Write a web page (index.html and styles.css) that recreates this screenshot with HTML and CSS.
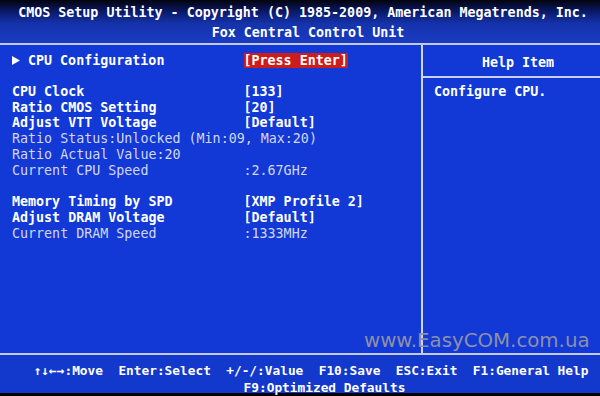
FILE: index.html
```html
<!DOCTYPE html>
<html lang="en">
<head>
  <meta charset="UTF-8" />
  <meta name="viewport" content="width=device-width, initial-scale=1.0" />
  <title>CMOS Setup Utility</title>
  <link rel="stylesheet" href="styles.css">
</head>
<body>
  <header class="title">
    <div class="title-main">CMOS Setup Utility - Copyright (C) 1985-2009, American Megatrends, Inc.</div>
    <div class="title-sub">Fox Central Control Unit</div>
  </header>
  <main class="panel">
    <section class="settings">
      <div class="row first">
        <span class="label"><span class="arrow"><svg width="8" height="9" viewBox="0 0 8 9"><path d="M0 0 L8 4.5 L0 9 Z" fill="#fff"/></svg></span>CPU Configuration</span>
        <span class="value"><span class="selected">[Press Enter]</span></span>
      </div>
      <div class="row"><span class="label">CPU Clock</span><span class="value">[133]</span></div>
      <div class="row"><span class="label">Ratio CMOS Setting</span><span class="value">[20]</span></div>
      <div class="row"><span class="label">Adjust VTT Voltage</span><span class="value">[Default]</span></div>
      <div class="row info">Ratio Status:Unlocked (Min:09, Max:20)</div>
      <div class="row info">Ratio Actual Value:20</div>
      <div class="row info"><span class="label">Current CPU Speed</span><span class="value">:2.67GHz</span></div>
      <div class="row blank"></div>
      <div class="row"><span class="label">Memory Timing by SPD</span><span class="value">[XMP Profile 2]</span></div>
      <div class="row"><span class="label">Adjust DRAM Voltage</span><span class="value">[Default]</span></div>
      <div class="row info"><span class="label">Current DRAM Speed</span><span class="value">:1333MHz</span></div>
    </section>
    <aside class="help">
      <div class="help-head">Help Item</div>
      <div class="help-text">Configure CPU.</div>
    </aside>
    <div class="watermark">www.EasyCOM.com.ua</div>
  </main>
  <footer class="keys">
    <div class="keys-main">↑↓←→:Move  Enter:Select  +/-/:Value  F10:Save  ESC:Exit  F1:General Help</div>
    <div class="keys-sub">F9:Optimized Defaults</div>
  </footer>
</body>
</html>
```

FILE: styles.css
```css
body {
  margin: 0;
  background: #000;
  color: #fff;
  font-family: "DejaVu Sans Mono", "Liberation Mono", monospace;
  font-weight: bold;
  font-size: 13.33px;
  width: 600px;
  height: 396px;
  overflow: hidden;
}

.title {
  height: 43px;
  border-bottom: 2px solid #c2c9ea;
  background: linear-gradient(#02030c 0, #0a1a6c 12px, #1533ac 24px, #1a3bc2 43px);
  text-align: center;
}
.title-main { padding: 2px 0 0 6px; line-height: 22px; white-space: nowrap; }
.title-sub { padding-left: 16px; line-height: 17px; }

.panel {
  position: relative;
  display: flex;
  height: 308px;
  background: #1239d6;
  border-bottom: 2px solid #c2c9ea;
}

.settings {
  width: 423px;
  padding: 8px 0 0 12px;
  box-sizing: border-box;
  border-right: 2px solid #d0d6f0;
}
.row {
  display: flex;
  line-height: 15.8px;
  height: 15.8px;
  white-space: nowrap;
}
.row.first { margin-bottom: 15px; }
.label { width: 231.5px; flex: none; display: flex; align-items: center; }
.arrow { width: 16px; display: inline-flex; align-items: center; }
.selected {
  display: inline-block;
  background: #cc1c1c;
  line-height: 15px;
}
.row.info { color: #d2d7ef; font-weight: normal; }

.help { flex: 1; }
.help-head {
  height: 33px;
  padding: 10px 0 0 13px;
  box-sizing: border-box;
  text-align: center;
  line-height: 15.75px;
  border-bottom: 2px solid #c8cff0;
}
.help-text {
  padding: 6px 0 0 11px;
  line-height: 15.75px;
}

.watermark {
  position: absolute;
  left: 364px;
  top: 286px;
  font-family: "DejaVu Sans", sans-serif;
  font-weight: normal;
  font-size: 19.8px;
  line-height: 20px;
  color: #8c90a8;
}

.keys {
  height: 38px;
  background: #1338cc;
  padding-top: 8px;
  box-sizing: border-box;
  font-size: 12.8px;
  line-height: 16.5px;
  text-align: center;
}
.keys-main { padding-left: 22px; white-space: pre; }
.keys-sub { padding-left: 49px; }
```
